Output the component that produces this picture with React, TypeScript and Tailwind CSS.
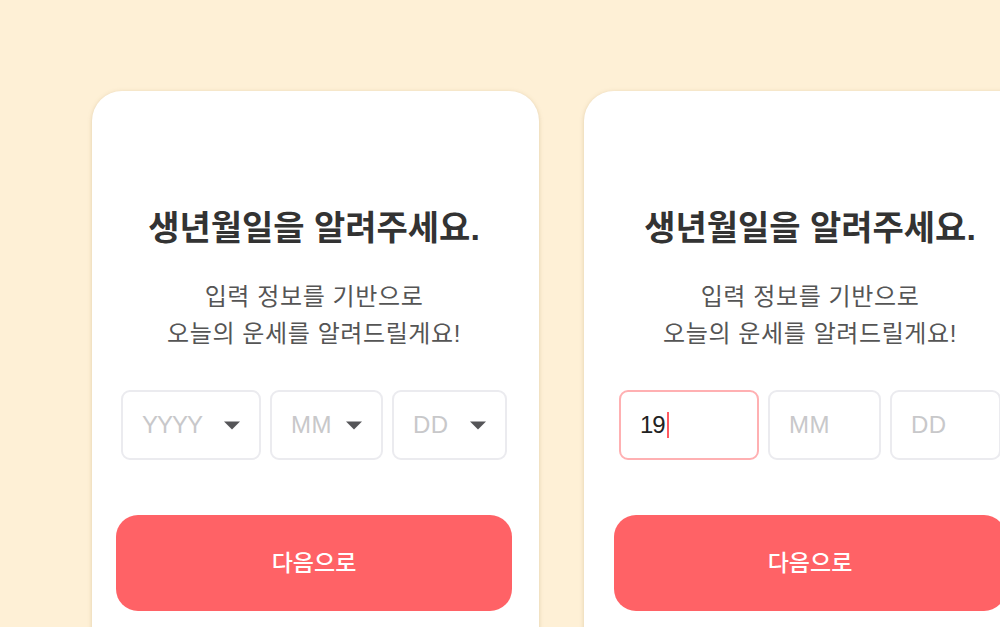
import { useState } from "react";

const font = "font-['Liberation_Sans','Noto_Sans_CJK_KR',sans-serif]";

function Caret() {
  return (
    <svg width="16" height="9" viewBox="0 0 16 9" className="shrink-0">
      <path d="M0 0.5h16L8 8.5z" fill="#555558" />
    </svg>
  );
}

function SelectBox({ label, className }: { label: string; className: string }) {
  return (
    <div
      className={`h-[70px] flex items-center justify-between pl-[19px] pr-[19px] border-2 border-[#ebebef] rounded-[9px] bg-white ${className}`}
    >
      <span className={`text-[24px] text-[#c8c8ca] ${label === "YYYY" ? "tracking-[-1px]" : "tracking-[0.5px]"}`}>{label}</span>
      <Caret />
    </div>
  );
}

function TextBox({ value, placeholder, active, className }: { value?: string; placeholder: string; active?: boolean; className: string }) {
  return (
    <div
      className={`h-[70px] flex items-center pl-[19px] border-2 rounded-[9px] bg-white ${
        active ? "border-[#ffb0b2]" : "border-[#ebebef]"
      } ${className}`}
    >
      {value ? (
        <>
          <span className="text-[24px] text-[#222] tracking-[-1px]">{value}</span>
          <span className="ml-[2px] w-[2px] h-[26px] bg-[#ff5a60]" />
        </>
      ) : (
        <span className="text-[24px] text-[#c8c8ca] tracking-[0.5px]">{placeholder}</span>
      )}
    </div>
  );
}

function Card({ pad, children }: { pad: string; children: React.ReactNode }) {
  return (
    <section
      className={`shrink-0 h-[600px] rounded-[30px] bg-white shadow-[0_1px_4px_rgba(170,140,90,0.35)] pt-[117px] pr-[27px] ${pad}`}
    >
      <h1 className="text-center text-[34px] leading-[40px] font-bold text-[#333] whitespace-nowrap">
        생년월일을 알려주세요.
      </h1>
      <p className="mt-[30px] text-center text-[24px] leading-[37px] text-[#555] tracking-[0.6px] whitespace-nowrap">
        입력 정보를 기반으로
        <br />
        오늘의 운세를 알려드릴게요!
      </p>
      <div className="mt-[38px] px-[5px] flex gap-[9px]">{children}</div>
      <button className="mt-[55px] w-full h-[96px] rounded-[22px] bg-[#ff6266] text-white text-[23px] font-medium">
        다음으로
      </button>
    </section>
  );
}

export default function App() {
  const [year] = useState("19");

  return (
    <main className={`h-[627px] w-[1000px] overflow-hidden bg-[#fef0d6] flex gap-[45px] pl-[92px] pt-[91px] ${font}`}>
      <div className="w-[447px] shrink-0 flex">
        <Card pad="pl-[24px] w-[447px]">
          <SelectBox label="YYYY" className="w-[140px]" />
          <SelectBox label="MM" className="w-[113px]" />
          <SelectBox label="DD" className="flex-1" />
        </Card>
      </div>
      <div className="w-[449px] shrink-0 flex">
        <Card pad="pl-[30px] w-[449px]">
          <TextBox value={year} placeholder="YYYY" active className="w-[140px]" />
          <TextBox placeholder="MM" className="w-[113px]" />
          <TextBox placeholder="DD" className="flex-1" />
        </Card>
      </div>
    </main>
  );
}
